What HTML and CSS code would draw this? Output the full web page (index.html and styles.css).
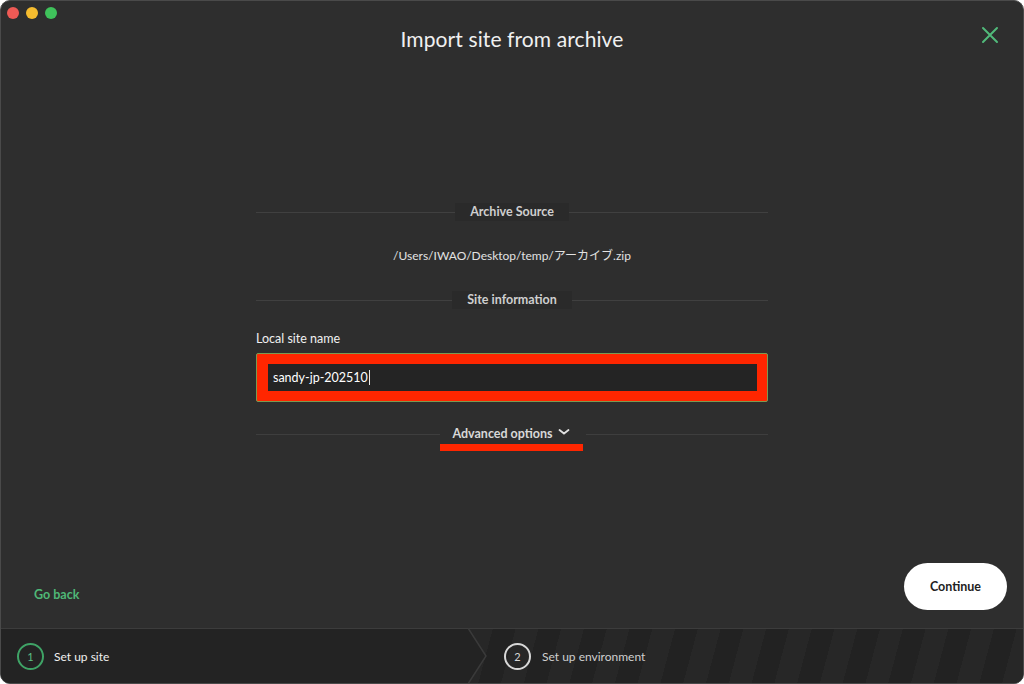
FILE: index.html
```html
<!DOCTYPE html>
<html>
<head>
<meta charset="utf-8">
<link rel="stylesheet" href="styles.css">
</head>
<body>
<div class="window">
  <header class="titlebar">
    <div class="lights">
      <span class="light red"></span>
      <span class="light yellow"></span>
      <span class="light green"></span>
    </div>
    <h1 class="title">Import site from archive</h1>
    <button class="close" aria-label="Close">
      <svg width="18" height="18" viewBox="0 0 18 18"><path d="M2 2L16 16M16 2L2 16" stroke="#51b97a" stroke-width="2" stroke-linecap="round"/></svg>
    </button>
  </header>

  <main class="content">
    <div class="form">
      <div class="divider divider-first"><span class="divider-label">Archive Source</span></div>
      <p class="path">/Users/IWAO/Desktop/temp/アーカイブ.zip</p>
      <div class="divider"><span class="divider-label">Site information</span></div>
      <label class="field-label">Local site name</label>
      <div class="input">
        <div class="input-inner"><span class="input-text">sandy-jp-202510</span><span class="caret"></span></div>
      </div>
      <div class="divider divider-adv">
        <span class="adv-label">Advanced options
          <svg class="chev" width="12" height="8" viewBox="0 0 12 8"><path d="M1.5 2L6 5.5L10.5 2" stroke="#e0e0e0" stroke-width="1.8" fill="none" stroke-linecap="round"/></svg>
          <span class="adv-mark"></span>
        </span>
      </div>
    </div>
  </main>

  <div class="actions">
    <a class="goback">Go back</a>
    <button class="continue">Continue</button>
  </div>

  <footer class="steps">
    <div class="step step-active">
      <span class="step-num">1</span>
      <span class="step-text">Set up site</span>
      <svg class="chevron" width="20" height="56" viewBox="0 0 20 56"><path d="M0 0L18 28L0 56" stroke="#3a3a3a" stroke-width="1.5" fill="#232323"/></svg>
    </div>
    <div class="step step-next">
      <span class="step-num">2</span>
      <span class="step-text">Set up environment</span>
    </div>
  </footer>
</div>
</body>
</html>
```

FILE: styles.css
```css
* { box-sizing: border-box; }
html, body { margin: 0; padding: 0; background: #ffffff; }
body {
  width: 1024px;
  height: 684px;
  font-family: Lato, "Noto Sans CJK JP", sans-serif;
  overflow: hidden;
}
.window {
  width: 1024px;
  height: 684px;
  background: #2e2e2e;
  border-radius: 10px;
  border: 1px solid #4a4a4a;
  overflow: hidden;
  display: flex;
  flex-direction: column;
}
.titlebar {
  height: 80px;
  display: flex;
  align-items: flex-start;
  justify-content: center;
  position: relative;
  flex-shrink: 0;
}
.lights {
  position: absolute;
  left: 6px;
  top: 6px;
  display: flex;
  gap: 7px;
}
.light {
  width: 12px;
  height: 12px;
  border-radius: 50%;
  display: block;
}
.light.red { background: #ee5a55; }
.light.yellow { background: #f5bc2f; }
.light.green { background: #3fc25b; }
.title {
  margin: 25px 0 0;
  font-size: 21px;
  font-weight: 400;
  color: #f0f0f0;
  letter-spacing: 0.1px;
}
.close {
  position: absolute;
  right: 24px;
  top: 25px;
  background: none;
  border: none;
  padding: 0;
  width: 18px;
  height: 18px;
}
.content {
  flex: 1;
  display: flex;
  justify-content: center;
}
.form {
  width: 512px;
  padding-top: 122px;
  display: flex;
  flex-direction: column;
}
.divider {
  height: 18px;
  display: flex;
  align-items: center;
  justify-content: center;
  position: relative;
}
.divider::before {
  content: "";
  position: absolute;
  left: 0; right: 0; top: 50%;
  border-top: 1px solid #404040;
}
.divider-label {
  position: relative;
  background: #2a2a2a;
  color: #cfcfcf;
  font-size: 12.5px;
  font-weight: 700;
  padding: 0 15px;
  height: 18px;
  line-height: 18px;
}
.path {
  margin: 27px 0 27px;
  text-align: center;
  color: #e2e2e2;
  font-size: 12px;
  line-height: 16px;
}
.field-label {
  margin-top: 22px;
  color: #f0f0f0;
  font-size: 12.5px;
  line-height: 16px;
}
.input {
  margin-top: 6px;
  height: 49px;
  border: 1px solid #7a9a52;
  background: #ff2600;
  border-radius: 2px;
  padding: 10px 10px 9px 11px;
}
.input-inner {
  background: #242424;
  height: 27px;
  display: flex;
  align-items: center;
  padding-left: 5px;
}
.input-text {
  color: #ffffff;
  font-size: 12.5px;
}
.caret {
  display: inline-block;
  width: 1px;
  height: 15px;
  background: #e8e8e8;
  margin-left: 1px;
}
.divider-adv {
  margin-top: 23px;
}
.divider-adv::before { border-top-color: #3e3e3e; }
.adv-label {
  position: relative;
  background: #2e2e2e;
  color: #d8d8d8;
  font-size: 12.5px;
  font-weight: 700;
  padding: 0 16px 0 12px;
  height: 18px;
  line-height: 18px;
  display: flex;
  align-items: center;
  gap: 5px;
  margin-left: 2px;
}
.chev { margin-top: -4px; }
.adv-mark {
  position: absolute;
  left: 0;
  top: 19px;
  width: 143px;
  height: 7px;
  background: #ff2600;
}
.actions {
  height: 91px;
  flex-shrink: 0;
  display: flex;
  align-items: flex-start;
  justify-content: space-between;
  padding: 26px 16px 0 33px;
}
.goback {
  margin-top: 24px;
  color: #4fb877;
  font-size: 12.5px;
  font-weight: 700;
}
.continue {
  width: 103px;
  height: 47px;
  border: none;
  border-radius: 24px;
  background: #ffffff;
  color: #222222;
  font-family: Lato, sans-serif;
  font-size: 12.5px;
  font-weight: 700;
}
.steps {
  height: 55px;
  flex-shrink: 0;
  border-top: 1px solid #3c3c3c;
  display: flex;
  background: #252525;
}
.step {
  display: flex;
  align-items: center;
  position: relative;
}
.step-active {
  width: 469px;
  background: #232323;
  padding-left: 16px;
}
.chevron {
  position: absolute;
  right: -18px;
  top: -1px;
  z-index: 1;
}
.step-next {
  flex: 1;
  padding-left: 34px;
  background: repeating-linear-gradient(105deg, #272727 0px, #272727 22px, #222222 22px, #222222 44px);
}
.step-num {
  width: 27px;
  height: 27px;
  border-radius: 50%;
  border: 2px solid #3fa366;
  color: #5cbf83;
  font-size: 11px;
  display: flex;
  align-items: center;
  justify-content: center;
  margin-right: 10px;
}
.step-text {
  color: #f0f0f0;
  font-size: 12px;
}
.step-next .step-num {
  border-color: #d8d8d8;
  color: #d8d8d8;
  margin-right: 11px;
}
.step-next .step-text { color: #cfcfcf; }
```
